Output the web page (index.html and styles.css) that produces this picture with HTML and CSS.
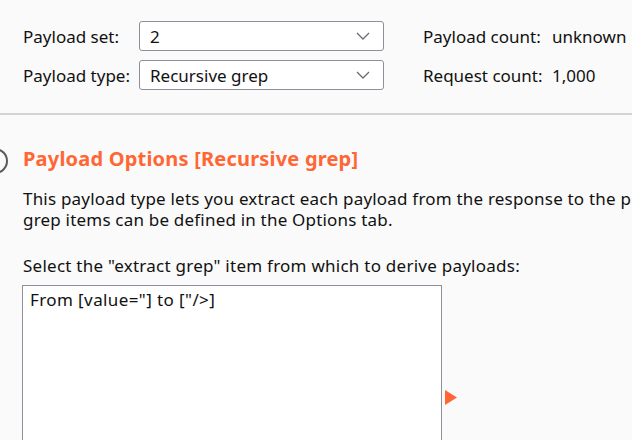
FILE: index.html
```html
<!DOCTYPE html>
<html>
<head>
<meta charset="utf-8">
<link rel="stylesheet" href="styles.css">
</head>
<body>
<div class="page">
  <section class="top">
    <div class="grid">
      <span class="lbl">Payload set:</span>
      <div class="select"><span>2</span><svg class="chev" width="14" height="8" viewBox="0 0 14 8"><path d="M1 1 L7 7 L13 1" fill="none" stroke="#6b6b75" stroke-width="1.3"/></svg></div>
      <span class="info">Payload count:</span>
      <span class="val">unknown</span>
      <span class="lbl">Payload type:</span>
      <div class="select"><span>Recursive grep</span><svg class="chev" width="14" height="8" viewBox="0 0 14 8"><path d="M1 1 L7 7 L13 1" fill="none" stroke="#6b6b75" stroke-width="1.3"/></svg></div>
      <span class="info">Request count:</span>
      <span class="val">1,000</span>
    </div>
  </section>
  <section class="options">
    <div class="circle"></div>
    <h2 class="title">Payload Options [Recursive grep]</h2>
    <p class="desc">This payload type lets you extract each payload from the response to the previous request in the attack. The extract<br>grep items can be defined in the Options tab.</p>
    <p class="prompt">Select the "extract grep" item from which to derive payloads:</p>
    <div class="listrow">
      <div class="listbox"><div class="item">From [value="] to ["/&gt;]</div></div>
      <svg class="arrow" width="12" height="15" viewBox="0 0 12 15"><path d="M0 0 L12 7.5 L0 15 Z" fill="#ff6633"/></svg>
    </div>
  </section>
</div>
</body>
</html>
```
FILE: styles.css
```css
html, body {
  margin: 0;
  padding: 0;
  background: #fafafa;
  overflow: hidden;
}
body {
  font-family: "Noto Sans", "Open Sans", sans-serif;
  font-size: 17px;
  color: #111;
  width: 632px;
  height: 440px;
}
.page {
  width: 632px;
  white-space: nowrap;
}
.top {
  height: 113px;
  border-bottom: 2px solid #d4d4d4;
}
.grid {
  display: grid;
  grid-template-columns: 116px 245px 168px auto;
  row-gap: 9px;
  padding: 21px 0 0 23px;
  align-items: center;
}
.info {
  padding-left: 39px;
}
.select {
  box-sizing: border-box;
  height: 30px;
  border: 1px solid #8f8f9c;
  border-radius: 3px;
  background: #fff;
  display: flex;
  align-items: center;
  justify-content: space-between;
  padding: 0 13px 0 10px;
}
.options {
  position: relative;
  padding: 0 0 0 23px;
}
.circle {
  position: absolute;
  left: -18px;
  top: 33px;
  width: 22px;
  height: 22px;
  border: 2px solid #5a5a5a;
  border-radius: 50%;
}
.title {
  margin: 0;
  padding-top: 31px;
  font-size: 20px;
  font-weight: bold;
  color: #ff6633;
  line-height: 26px;
  letter-spacing: 0.2px;
}
.desc {
  margin: 16px 0 0 0;
  line-height: 21px;
  letter-spacing: 0.2px;
}
.prompt {
  margin: 25px 0 0 0;
  line-height: 21px;
  letter-spacing: 0.25px;
}
.listrow {
  display: flex;
  align-items: flex-start;
  margin-top: 9px;
}
.listbox {
  box-sizing: border-box;
  width: 420px;
  height: 200px;
  background: #fff;
  border: 1px solid #8f8f9c;
  margin-left: -1px;
}
.item {
  padding: 3px 7px;
  line-height: 21px;
  letter-spacing: 0.4px;
}
.arrow {
  margin-left: 3px;
  margin-top: 105px;
}
```
